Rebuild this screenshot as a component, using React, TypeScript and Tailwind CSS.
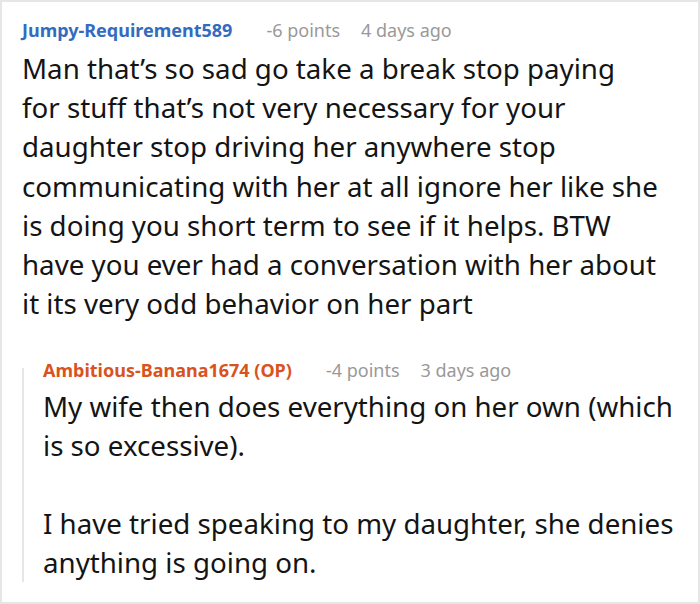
import React from "react";

export default function App() {
  return (
    <div className="w-[700px] h-[604px] bg-white border-2 border-[#e6e6e6] overflow-hidden" style={{ fontFamily: '"Noto Sans", "Open Sans", sans-serif' }}>
      <div className="pl-[20px] pt-[15px] pr-2">
        <div className="flex items-baseline text-[18px] leading-[26px]">
          <span className="font-bold text-[#336bbf]">Jumpy-Requirement589</span>
          <span className="ml-[34px] text-[#999999]">-6 points</span>
          <span className="ml-[21px] text-[#999999]">4 days ago</span>
        </div>
        <p className="text-[27.7px] leading-[39.2px] text-[#141414] mt-[6px] whitespace-nowrap">
          Man that’s so sad go take a break stop paying
          <br />
          for stuff that’s not very necessary for your
          <br />
          daughter stop driving her anywhere stop
          <br />
          communicating with her at all ignore her like she
          <br />
          is doing you short term to see if it helps. BTW
          <br />
          have you ever had a conversation with her about
          <br />
          it its very odd behavior on her part
        </p>
        <div className="flex mt-[34px] pb-[13px]">
          <div className="w-[2px] bg-[#e6e6e6] mt-[11px]" />
          <div className="pl-[19px] flex-1">
            <div className="flex items-baseline text-[18px] leading-[26px]">
              <span className="font-bold text-[#d9531e]">Ambitious-Banana1674 (OP)</span>
              <span className="ml-[34px] text-[#999999]">-4 points</span>
              <span className="ml-[21px] text-[#999999]">3 days ago</span>
            </div>
            <p className="text-[27.7px] leading-[39px] text-[#141414] mt-[4px] whitespace-nowrap">
              My wife then does everything on her own (which
              <br />
              is so excessive).
            </p>
            <p className="text-[27.7px] leading-[39px] text-[#141414] mt-[39px] whitespace-nowrap">
              I have tried speaking to my daughter, she denies
              <br />
              anything is going on.
            </p>
          </div>
        </div>
      </div>
    </div>
  );
}
